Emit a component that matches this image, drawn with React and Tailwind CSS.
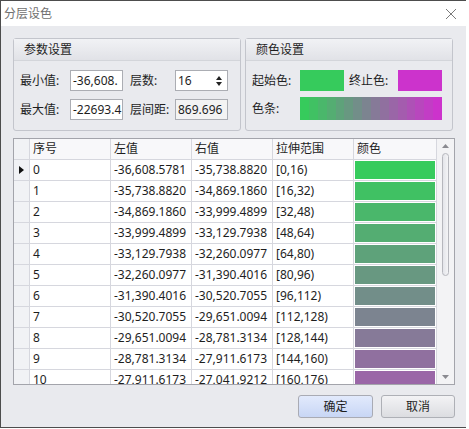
const START = [54, 203, 92];
const END = [204, 51, 204];

const mix = (t) => {
  const c = START.map((s, i) => Math.round(s + (END[i] - s) * t));
  return `rgb(${c[0]},${c[1]},${c[2]})`;
};

const rows = [
  ["0", "-36,608.5781", "-35,738.8820", "[0,16)"],
  ["1", "-35,738.8820", "-34,869.1860", "[16,32)"],
  ["2", "-34,869.1860", "-33,999.4899", "[32,48)"],
  ["3", "-33,999.4899", "-33,129.7938", "[48,64)"],
  ["4", "-33,129.7938", "-32,260.0977", "[64,80)"],
  ["5", "-32,260.0977", "-31,390.4016", "[80,96)"],
  ["6", "-31,390.4016", "-30,520.7055", "[96,112)"],
  ["7", "-30,520.7055", "-29,651.0094", "[112,128)"],
  ["8", "-29,651.0094", "-28,781.3134", "[128,144)"],
  ["9", "-28,781.3134", "-27,911.6173", "[144,160)"],
  ["10", "-27,911.6173", "-27,041.9212", "[160,176)"],
  ["11", "-27,041.9212", "-26,172.2251", "[176,192)"],
];

const font = { fontFamily: '"Noto Sans", "Noto Sans CJK SC", sans-serif' };

const GroupBox = ({ title, className, children }) => (
  <div className={`border border-[#c3c5cc] rounded-[3px] bg-[#e9eaee] flex flex-col ${className}`}>
    <div className="h-[22px] flex items-center pl-[10px] text-[12px] text-[#1e1e1e] bg-gradient-to-b from-[#f1f2f5] to-[#e1e2e7] border-b border-[#d3d5da]">
      {title}
    </div>
    {children}
  </div>
);

const Field = ({ children, className }) => (
  <div
    className={`h-[21px] border border-[#abadb3] flex items-center pl-[2px] overflow-hidden whitespace-nowrap text-[12px] text-[#1e1e1e] ${className}`}
  >
    {children}
  </div>
);

const Label = ({ children, className }) => (
  <div className={`text-[12px] text-[#1e1e1e] whitespace-nowrap ${className}`}>{children}</div>
);

const Cell = ({ children, className = "" }) => (
  <div
    className={`h-[21px] border-r border-b border-[#d6d7de] flex items-center pl-[3px] overflow-hidden whitespace-nowrap ${className}`}
  >
    {children}
  </div>
);

const App = () => {
  return (
    <div className="w-[469px] h-[429px] bg-white" style={font}>
      <div className="w-[466px] h-[428px] border-t border-l border-b border-[#4d4d4d] border-r-[#9a9a9a] flex flex-col bg-[#e9eaee]">
        {/* title bar */}
        <div className="h-[25px] bg-white flex items-center justify-between pl-[3px] pr-[8px]">
          <span className="text-[12px] text-[#707070]">分层设色</span>
          <svg width="12" height="12" viewBox="0 0 12 12" className="mr-[1px]">
            <path d="M1 1L11 11M11 1L1 11" stroke="#7a7a7a" strokeWidth="1" />
          </svg>
        </div>

        <div className="flex-1 pl-[12px] pr-[11px] pt-[12px] flex flex-col">
          {/* groups */}
          <div className="flex gap-[4px] h-[93px]">
            <GroupBox title="参数设置" className="w-[228px]">
              <div className="flex flex-col gap-[8px] pt-[9px] pl-[6px]">
                <div className="flex items-center">
                  <Label className="w-[50px]">最小值:</Label>
                  <Field className="w-[53px] bg-white">-36,608.</Field>
                  <Label className="w-[45px] ml-[7px]">层数:</Label>
                  <div className="w-[53px] h-[21px] border border-[#abadb3] bg-white flex items-center justify-between pl-[2px] pr-[4px] text-[12px] text-[#1e1e1e]">
                    <span>16</span>
                    <svg width="8" height="14" viewBox="0 0 8 14">
                      <path d="M4 2L7 6H1Z" fill="#222" />
                      <path d="M4 12L7 8H1Z" fill="#222" />
                    </svg>
                  </div>
                </div>
                <div className="flex items-center">
                  <Label className="w-[50px]">最大值:</Label>
                  <Field className="w-[53px] bg-white">-22693.4</Field>
                  <Label className="w-[45px] ml-[7px]">层间距:</Label>
                  <Field className="w-[53px] bg-[#f3f3f3]">869.696</Field>
                </div>
              </div>
            </GroupBox>

            <GroupBox title="颜色设置" className="w-[208px]">
              <div className="flex flex-col gap-[6px] pt-[9px] pl-[6px]">
                <div className="flex items-center">
                  <Label className="w-[48px]">起始色:</Label>
                  <div className="w-[44px] h-[21px]" style={{ backgroundColor: mix(0) }} />
                  <Label className="w-[49px] ml-[5px]">终止色:</Label>
                  <div className="w-[44px] h-[21px]" style={{ backgroundColor: mix(1) }} />
                </div>
                <div className="flex items-center">
                  <Label className="w-[48px]">色条:</Label>
                  <div className="w-[142px] h-[23px] flex">
                    {Array.from({ length: 16 }).map((_, i) => (
                      <div key={i} className="flex-1 h-full" style={{ backgroundColor: mix(i / 15) }} />
                    ))}
                  </div>
                </div>
              </div>
            </GroupBox>
          </div>

          {/* grid */}
          <div className="mt-[7px] h-[247px] border border-[#a3a4ab] bg-white flex text-[12px] text-[#1e1e1e]">
            <div className="flex-1 overflow-hidden">
              <div className="grid grid-cols-[16px_81px_81px_81px_81px_1fr]">
                <Cell className="bg-[#f1f2f5]" />
                <Cell className="bg-[#f8f8fa]">序号</Cell>
                <Cell className="bg-[#f8f8fa]">左值</Cell>
                <Cell className="bg-[#f8f8fa]">右值</Cell>
                <Cell className="bg-[#f8f8fa]">拉伸范围</Cell>
                <Cell className="bg-[#f8f8fa]">颜色</Cell>
                {rows.map((r, i) => (
                  <div key={r[0]} className="contents">
                    <Cell className="bg-[#f1f2f5] justify-center !pl-0">
                      {i === 0 && (
                        <svg width="5" height="8" viewBox="0 0 5 8">
                          <path d="M0 0L5 4L0 8Z" fill="#111" />
                        </svg>
                      )}
                    </Cell>
                    <Cell>{r[0]}</Cell>
                    <Cell>{r[1]}</Cell>
                    <Cell>{r[2]}</Cell>
                    <Cell>{r[3]}</Cell>
                    <Cell className="!pl-[1px] pr-[1px] pt-[1px] pb-[1px]">
                      <div className="w-full h-full" style={{ backgroundColor: mix(i / 15) }} />
                    </Cell>
                  </div>
                ))}
              </div>
            </div>

            {/* scrollbar */}
            <div className="w-[17px] bg-[#f3f3f5] flex flex-col items-center pt-[5px] pb-[5px]">
              <svg width="7" height="4" viewBox="0 0 7 4">
                <path d="M3.5 0L7 4H0Z" fill="#8a8a90" />
              </svg>
              <div className="mt-[5px] w-[7px] h-[123px] rounded-full border border-[#b6b7bd] bg-gradient-to-r from-[#e4e5ea] to-[#f4f4f6]" />
              <div className="flex-1" />
              <svg width="7" height="4" viewBox="0 0 7 4">
                <path d="M0 0H7L3.5 4Z" fill="#8a8a90" />
              </svg>
            </div>
          </div>

          {/* buttons */}
          <div className="mt-[10px] flex justify-end gap-[8px] text-[12px] text-[#1e1e1e]">
            <button className="w-[75px] h-[23px] border border-[#a9abb4] rounded-[3px] bg-gradient-to-b from-[#e2eafc] to-[#c8d6f5] text-center">
              确定
            </button>
            <button className="w-[74px] h-[23px] border border-[#aeb0b6] rounded-[3px] bg-gradient-to-b from-[#f3f3f5] to-[#dcdde1] text-center">
              取消
            </button>
          </div>
        </div>
      </div>
    </div>
  );
};

export default App;
